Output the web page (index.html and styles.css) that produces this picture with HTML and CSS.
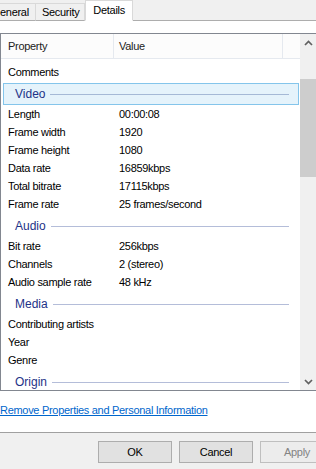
FILE: index.html
```html
<!DOCTYPE html>
<html lang="en">
<head>
    <meta charset="UTF-8">
    <meta name="viewport" content="width=device-width, initial-scale=1.0">
    <title>Properties</title>
    <link rel="stylesheet" href="styles.css">
</head>
<body>

    <div class="window">
        <div class="tabs">
            <div class="tab tab-first">eneral</div>
            <div class="tab">Security</div>
            <div class="tab tab-active">Details</div>
        </div>

        <div class="panel">
            <div class="list">
                <div class="list-body">
                    <div class="list-head">
                        <div class="col-prop">Property</div>
                        <div class="col-val">Value</div>
                        <div class="col-rest"></div>
                    </div>
                    <div class="rows">
                        <div class="row"><span class="prop">Comments</span><span class="val"></span></div>

                        <div class="group selected"><span>Video</span><i></i></div>
                        <div class="row"><span class="prop">Length</span><span class="val">00:00:08</span></div>
                        <div class="row"><span class="prop">Frame width</span><span class="val">1920</span></div>
                        <div class="row"><span class="prop">Frame height</span><span class="val">1080</span></div>
                        <div class="row"><span class="prop">Data rate</span><span class="val">16859kbps</span></div>
                        <div class="row"><span class="prop">Total bitrate</span><span class="val">17115kbps</span></div>
                        <div class="row"><span class="prop">Frame rate</span><span class="val">25 frames/second</span></div>

                        <div class="group"><span>Audio</span><i></i></div>
                        <div class="row"><span class="prop">Bit rate</span><span class="val">256kbps</span></div>
                        <div class="row"><span class="prop">Channels</span><span class="val">2 (stereo)</span></div>
                        <div class="row"><span class="prop">Audio sample rate</span><span class="val">48 kHz</span></div>

                        <div class="group"><span>Media</span><i></i></div>
                        <div class="row"><span class="prop">Contributing artists</span><span class="val"></span></div>
                        <div class="row"><span class="prop">Year</span><span class="val"></span></div>
                        <div class="row"><span class="prop">Genre</span><span class="val"></span></div>

                        <div class="group"><span>Origin</span><i></i></div>
                    </div>
                </div>

                <div class="scrollbar">
                    <div class="arrow">
                        <svg width="9" height="6" viewBox="0 0 9 6"><polyline points="1,5 4.5,1.5 8,5" fill="none" stroke="#606060" stroke-width="1.7"/></svg>
                    </div>
                    <div class="track"><div class="thumb"></div></div>
                    <div class="arrow">
                        <svg width="9" height="6" viewBox="0 0 9 6"><polyline points="1,1 4.5,4.5 8,1" fill="none" stroke="#606060" stroke-width="1.7"/></svg>
                    </div>
                </div>
            </div>

            <a class="remove-link" href="#">Remove Properties and Personal Information</a>
        </div>

        <div class="buttons">
            <button>OK</button>
            <button>Cancel</button>
            <button disabled>Apply</button>
        </div>
    </div>

</body>
</html>
```

FILE: styles.css
```css
*, *::before, *::after {
  box-sizing: border-box;
}

html, body {
  overflow: hidden;
}

body {
  margin: 0;
  background-color: #f0f0f0;
  color: #000;
  font: 11px/14px 'Liberation Sans', Arial, sans-serif;
  letter-spacing: -0.3px;
}

.window {
  width: 316px;
  height: 469px;
}

/* tab strip */
.tabs {
  display: flex;
  align-items: flex-end;
  height: 21px;
  border-bottom: 1px solid #adadad;
}

.tab {
  height: 18px;
  margin-bottom: -1px;
  padding: 0 5px 0 6px;
  border: 1px solid #d9d9d9;
  border-bottom-color: #adadad;
  background-color: #f0f0f0;
  line-height: 16px;
}

.tab + .tab {
  margin-left: -1px;
}

.tab-first {
  width: 36px;
  padding: 0;
  border-left: none;
}

.tab-active {
  position: relative;
  height: 21px;
  margin-left: 0 !important;
  padding: 0 7px;
  border-color: #d9d9d9;
  border-bottom-color: #fff;
  background-color: #fff;
  line-height: 19px;
}

/* white panel */
.panel {
  height: 412px;
  padding-top: 12px;
  border-bottom: 1px solid #a0a0a0;
  background-color: #fff;
}

.list {
  display: flex;
  width: 318px;
  height: 358px;
  border: 1px solid #828790;
  overflow: hidden;
}

.list-body {
  flex: 1;
  min-width: 0;
}

.list-head {
  display: flex;
  height: 25px;
  border-bottom: 1px solid #e5e9ef;
  background-color: #fcfcfc;
  color: #222;
  line-height: 24px;
}

.col-prop {
  width: 113px;
  padding-left: 7px;
  border-right: 1px solid #e5e9ef;
}

.col-val {
  width: 169px;
  padding-left: 5px;
  border-right: 1px solid #e5e9ef;
}

.col-rest {
  flex: 1;
}

.rows {
  padding-top: 4px;
}

.row {
  display: flex;
  height: 18px;
  line-height: 18px;
}

.prop {
  width: 118px;
  padding-left: 7px;
}

.group {
  display: flex;
  align-items: center;
  gap: 5px;
  height: 22px;
  margin: 2px 1px 0 2px;
  padding: 0 9px 0 11px;
  border: 1px solid transparent;
  color: #1e3287;
  font-size: 12px;
  letter-spacing: 0;
}

.group i {
  flex: 1;
  height: 1px;
  background-color: #b4bdd9;
}

.group.selected {
  border-color: #84c5eb;
  background-color: #e5f3fb;
}

.group.selected i {
  background-color: #a5b9d6;
}

/* scrollbar */
.scrollbar {
  display: flex;
  flex-direction: column;
  width: 17px;
  background-color: #f0f0f0;
}

.arrow {
  display: flex;
  justify-content: center;
  align-items: center;
  height: 17px;
}

.track {
  flex: 1;
}

.thumb {
  width: 16px;
  height: 98px;
  margin-top: 28px;
  background-color: #cdcdcd;
}

.remove-link {
  display: inline-block;
  margin-top: 12px;
  color: #0066cc;
  text-decoration: underline;
}

/* bottom buttons */
.buttons {
  display: flex;
  gap: 7px;
  padding: 8px 0 0 98px;
}

button {
  flex: none;
  width: 74px;
  height: 22px;
  padding: 0;
  border: 1px solid #adadad;
  background-color: #e1e1e1;
  color: #000;
  font: inherit;
  letter-spacing: inherit;
}

button:disabled {
  border-color: #bfbfbf;
  background-color: #ececec;
  color: #838383;
}
```
